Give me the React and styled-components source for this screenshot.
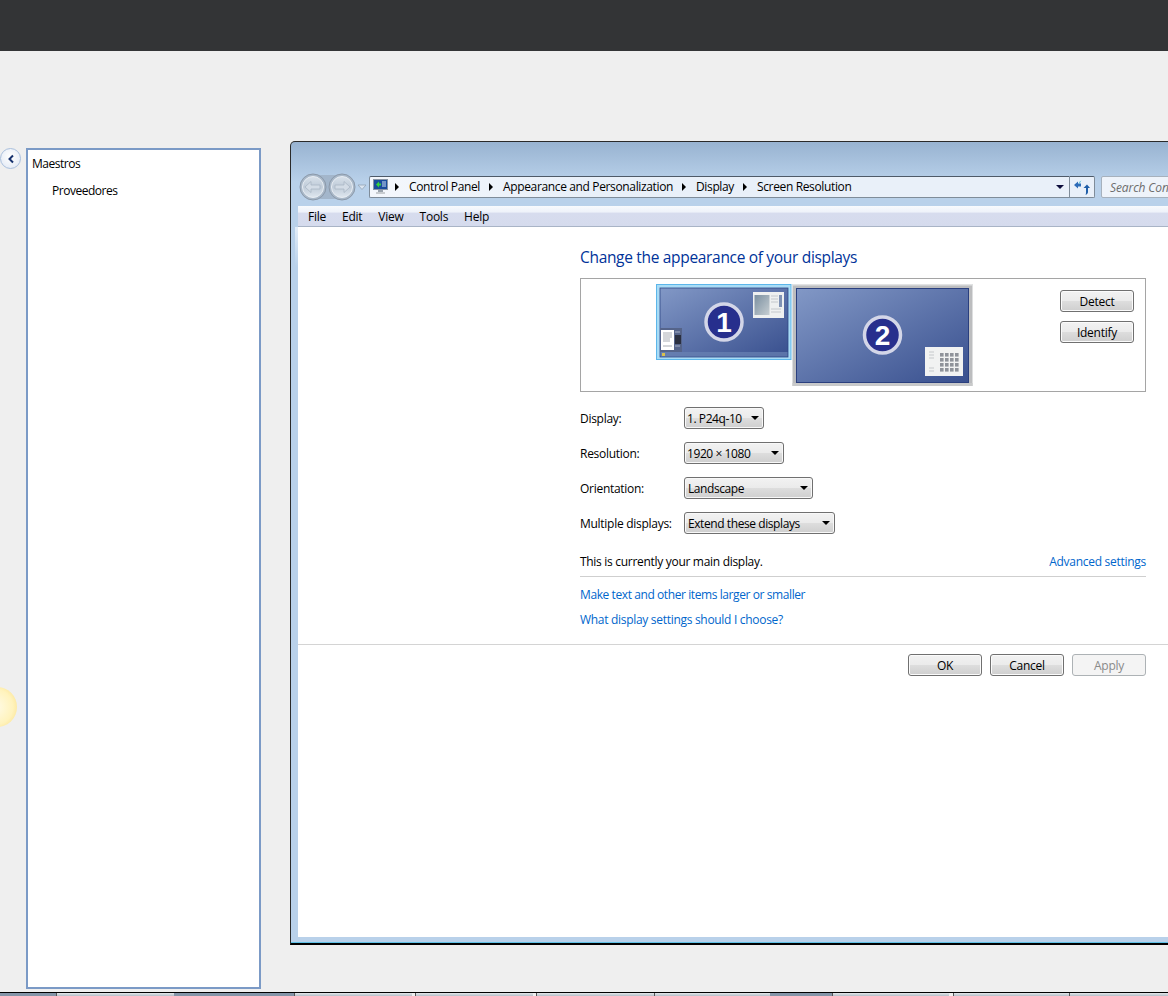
import React from "react";
import styled, { createGlobalStyle } from "styled-components";

const Global = createGlobalStyle`
  html, body { margin: 0; padding: 0; background: #efefef; }
  body { font-family: "Open Sans", "Noto Sans", sans-serif; font-size: 12px; color: #000; }
`;

const Page = styled.div`
  position: relative; width: 1168px; height: 996px; overflow: hidden;
  display: flex; flex-direction: column; background: #efefef;
`;
const TopBar = styled.header`height: 51px; flex: none; background: #333436;`;
const Main = styled.main`
  flex: 1; min-height: 0; display: flex; align-items: flex-start; padding-top: 90px;
`;
const ToggleCol = styled.div`width: 26px; flex: none; padding-top: 7px;`;
const Toggle = styled.button`
  display: flex; align-items: center; justify-content: center;
  width: 21px; height: 21px; margin: 0; padding: 0; border-radius: 50%;
  border: 1px solid #a9bfdd; background: radial-gradient(circle at 50% 40%, #fff, #dfe7f3);
`;
const Panel = styled.nav`
  box-sizing: border-box; flex: none; width: 235px; height: 841px; margin-top: 7px;
  background: #fff; border: 2px solid #7b9ac6; padding: 4px 0 0 4px;
`;
const TreeItem = styled.div`
  height: 27px; line-height: 20px; padding-left: ${p => p.$indent || 0}px; letter-spacing: -.48px;
`;
const Win = styled.section`
  box-sizing: border-box; flex: none; width: 1000px; height: 804px; margin-left: 29px;
  display: flex; flex-direction: column;
  border: 1px solid #2a2a2a; border-bottom: 2px solid #000; border-top-left-radius: 5px;
  background:
    linear-gradient(#e3edf8, #b9d1ea) no-repeat 4px 85px / 3px 40px,
    linear-gradient(#98b3d1 0, #b9d1ea 40px);
  box-shadow: inset 0 -1px 0 #5fc1e6;
`;
const Chrome = styled.div`
  height: 30px; flex: none; margin-top: 34px; padding-left: 7px; display: flex; align-items: flex-start;
`;
const Nav = styled.svg`display: block; flex: none; width: 71px; height: 30px; margin-top: -4px;`;
const Address = styled.div`
  box-sizing: border-box; flex: none; width: 700px; height: 22px;
  display: flex; align-items: center;
  background: linear-gradient(90deg, #f4f7fc, #e9f0f9 30%);
  border: 1px solid #7f8c99; border-top-color: #4e5a68; border-right: none; border-radius: 2px 0 0 2px;
`;
const AddressIcon = styled.svg`display: block; flex: none; width: 15px; height: 16px; margin: 0 -2px 0 3px;`;
const Crumb = styled.span`
  display: flex; align-items: center; white-space: nowrap; letter-spacing: -.36px; line-height: 18px; margin-top: -1px;
  &::before {
    content: ""; margin: 1px 10px 0 9px; border-style: solid; border-width: 4px 0 4px 4px;
    border-color: transparent transparent transparent #000;
  }
`;
const Drop = styled.i`
  margin-left: auto; margin-right: 5px; width: 0; height: 0;
  border-style: solid; border-width: 4px 4px 0 4px; border-color: #0d0d3c transparent transparent;
`;
const Refresh = styled.div`
  box-sizing: border-box; flex: none; width: 26px; height: 22px;
  display: flex; align-items: center; justify-content: center;
  background: #e9f0f9; border: 1px solid #7f8c99; border-top-color: #4e5a68; border-radius: 0 2px 2px 0;
`;
const Search = styled.div`
  box-sizing: border-box; flex: none; width: 200px; height: 22px; margin-left: 6px; padding-left: 8px;
  display: flex; align-items: center; font-style: italic; color: #6d6d6d; letter-spacing: -.1px;
  background: #eef3fa; border: 1px solid #a6b1bd; border-radius: 2px;
`;
const Inner = styled.div`
  flex: 1; min-height: 0; margin: 0 0 6px 7px; display: flex; flex-direction: column; background: #fff;
`;
const MenuBar = styled.div`
  height: 21px; flex: none; display: flex; align-items: center; padding: 0 0 0 10px; gap: 16px;
  background: linear-gradient(#f8fafd 0, #eef2fa 30%, #d7dcee 36%, #d5dbed 100%);
  border-bottom: 1px solid #a9b4c6; box-sizing: border-box; letter-spacing: -.25px;
`;
const Body = styled.div`
  padding: 0 0 0 282px; width: 566px;
`;
const Title = styled.h1`
  margin: 19px 0 0; font-size: 15.5px; line-height: 22px; font-weight: 400; color: #003399; letter-spacing: -.32px;
`;
const Preview = styled.div`
  box-sizing: border-box; margin-top: 10px; height: 114px; display: flex; align-items: flex-start;
  border: 1px solid #a5a5a5; padding: 5px 11px 0 75px;
`;
const Screens = styled.svg`display: block; flex: none; width: 318px; height: 103px;`;
const Side = styled.div`
  margin-left: auto; padding-top: 6px; display: flex; flex-direction: column; gap: 9px;
`;
const Btn = styled.button`
  box-sizing: border-box; width: 74px; height: 22px; margin: 0; padding: 0;
  font: 12px "Open Sans", sans-serif; letter-spacing: -.25px;
  color: ${p => (p.disabled ? "#8a8a8a" : "#000")};
  border: 1px solid ${p => (p.disabled ? "#adb2b5" : "#707070")}; border-radius: 3px;
  background: ${p => p.disabled ? "#f4f4f4" : "linear-gradient(#f2f2f2 0, #ebebeb 48%, #dddddd 52%, #cfcfcf 100%)"};
  box-shadow: ${p => (p.disabled ? "none" : "inset 0 0 0 1px #fbfbfb")};
`;
const Rows = styled.div`margin-top: 15px; display: flex; flex-direction: column; gap: 13px;`;
const Row = styled.div`display: flex; align-items: center; height: 22px;`;
const Label = styled.span`width: 104px; flex: none; letter-spacing: -.28px;`;
const Select = styled.div`
  box-sizing: border-box; height: 22px; width: ${p => p.$w}px; flex: none;
  display: flex; align-items: center; padding: 0 4px 0 ${p => p.$pad ?? 3}px; white-space: nowrap; letter-spacing: -.42px;
  border: 1px solid #707070; border-radius: 3px;
  background: linear-gradient(#f2f2f2 0, #ebebeb 48%, #dddddd 52%, #cfcfcf 100%);
  box-shadow: inset 0 0 0 1px #f8f8f8;
  &::after {
    content: ""; margin-left: auto; border-style: solid; border-width: 4px 4px 0;
    border-color: #000 transparent transparent;
  }
`;
const MainLine = styled.div`
  margin-top: 18px; height: 18px; display: flex; align-items: center; justify-content: space-between;
  padding-bottom: 6px; border-bottom: 1px solid #cfcfcf; letter-spacing: -.3px;
`;
const Lnk = styled.a`color: #0066cc; text-decoration: none; letter-spacing: ${p => p.$ls ?? -0.22}px;`;
const Links = styled.div`
  margin-top: 9px; display: flex; flex-direction: column; gap: 8px; line-height: 17px;
`;
const Footer = styled.div`
  margin-top: 16px; height: 34px; flex: none; border-top: 1px solid #d4d4d4;
  padding: 9px 0 0 610px; display: flex; gap: 8px;
`;
const Tabs = styled.footer`
  height: 4px; flex: none; display: flex; box-sizing: border-box; border-top: 1px solid #000;
`;
const Tab = styled.div`
  box-sizing: border-box; flex: none; width: ${p => p.$w}px; margin-left: ${p => p.$gap || 0}px;
  background: ${p => (p.$dark ? "#8495a8" : "linear-gradient(#e4e8ea, #b4bec8)")};
  border-left: 1px solid ${p => (p.$dark ? "#8495a8" : "#555")};
`;
const Glow = styled.div`
  position: absolute; left: -23px; top: 687px; width: 40px; height: 40px; border-radius: 50%;
  background: radial-gradient(circle at 45% 50%, #fffbe8 0, #fff3bd 60%, #fbe08a 90%, #f8e7ad 100%);
`;

function Monitor() {
  return (
    <AddressIcon viewBox="0 0 15 16">
      <rect x=".5" y=".5" width="14" height="10" fill="#1b4d9c" stroke="#8995a5" />
      <path d="M3 5.500l3-3v2h2v2H6v2z" fill="#35d33c" />
      <path d="M9 3h4M9 5h4M9 7h4" stroke="#cfe0f5" />
      <rect x="5" y="11" width="5" height="2" fill="#9aa3ad" />
      <rect x="3" y="13" width="9" height="2" fill="#c8ccd0" />
    </AddressIcon>
  );
}

function NavButtons() {
  return (
    <Nav viewBox="0 0 71 30">
      <defs>
        <linearGradient id="ng" x1="0" y1="0" x2="0" y2="1">
          <stop offset="0" stopColor="#d8e1ea" />
          <stop offset=".5" stopColor="#bfcbd8" />
          <stop offset="1" stopColor="#dfe7ef" />
        </linearGradient>
      </defs>
      <rect x="14" y="3" width="30" height="24" fill="#a3b6cb" />
      <circle cx="15" cy="15" r="13" fill="#aab9c9" stroke="#8b99aa" strokeWidth="1" />
      <circle cx="44" cy="15" r="13" fill="#aab9c9" stroke="#8b99aa" strokeWidth="1" />
      <circle cx="15" cy="15" r="10.500" fill="url(#ng)" stroke="#e8edf3" strokeWidth="1" />
      <circle cx="44" cy="15" r="10.500" fill="url(#ng)" stroke="#e8edf3" strokeWidth="1" />
      <path d="M7 15l6-5.500v3.500h9v4h-9v3.500z" fill="#d3dce6" stroke="#a9b6c4" strokeWidth=".8" />
      <path d="M52 15l-6-5.500v3.500h-9v4h9v3.500z" fill="#d3dce6" stroke="#a9b6c4" strokeWidth=".8" />
      <path d="M60 13h8l-4 4.500z" fill="#dbe5f0" stroke="#93a3b5" strokeWidth=".8" />
    </Nav>
  );
}

function RefreshIcon() {
  return (
    <svg width="16" height="15" viewBox="0 0 16 15">
      <path d="M0 5L4 1.500V3.500H7V6.500H4V8.500z" fill="#2d6cb8" />
      <path d="M5 3.500C5 2 6 .8 7.500 .5 6.500 1.500 6 2.500 6 3.500z" fill="#5cc7d8" />
      <path d="M9.500 8L13 4.500 16 8H14V12C14 13.500 13 14.500 11.500 14.800 12 14 12 13 12 12V8z" fill="#1f5ea8" />
    </svg>
  );
}

function Badge({ cx, cy, n }) {
  return (
    <g>
      <circle cx={cx} cy={cy} r="18" fill="#272f8d" stroke="#d3d6e8" strokeWidth="3.500" />
      <text x={cx} y={cy + 10} textAnchor="middle" fontFamily="'Liberation Sans', sans-serif"
        fontWeight="700" fontSize="28" fill="#fff">{n}</text>
    </g>
  );
}

function ScreensArt() {
  return (
    <Screens viewBox="0 0 318 103">
      <defs>
        <linearGradient id="s1" x1="0" y1="0" x2="1" y2="1">
          <stop offset="0" stopColor="#8298c6" />
          <stop offset="1" stopColor="#384f8e" />
        </linearGradient>
        <linearGradient id="pic" x1="0" y1="0" x2="1" y2="1">
          <stop offset="0" stopColor="#7a8fa0" />
          <stop offset="1" stopColor="#c6ced2" />
        </linearGradient>
      </defs>
      {/* monitor 1 */}
      <rect x=".5" y=".5" width="134.500" height="75" fill="#a9dcf6" stroke="#5cb6ea" />
      <rect x="4" y="4" width="128" height="69" fill="url(#s1)" stroke="#2f4786" strokeWidth=".8" />
      <rect x="4.500" y="68" width="127" height="4.500" fill="#6a83b4" opacity=".7" />
      <rect x="6" y="69" width="3" height="3" fill="#d9c04d" />
      <rect x="97" y="8" width="31" height="26" fill="#eef0f0" />
      <rect x="98.500" y="11" width="15" height="20" fill="url(#pic)" />
      <path d="M115 12h7M115 15h7M115 18h7M115 25h10M115 28h10" stroke="#c4c8cc" />
      <rect x="123" y="11" width="3" height="12" fill="#7f92b4" />
      <rect x="4" y="44" width="22" height="24" fill="#55648a" />
      <rect x="5" y="46" width="13" height="20" fill="#fff" />
      <path d="M7 49h9M7 51h9M7 53h9M7 55h7M7 57h7M7 62h9" stroke="#a9adb4" />
      <rect x="19" y="51" width="6" height="9" fill="#2a2f3f" />
      <path d="M19 48h5M19 62h5" stroke="#a6aec4" />
      {/* monitor 2 */}
      <rect x="136.500" y="0" width="180" height="102" fill="#bcbdbf" />
      <rect x="136.500" y="0" width="180" height="1.500" fill="#e2e3e4" />
      <rect x="136.500" y="99" width="180" height="3" fill="#c8c9ca" />
      <rect x="140.500" y="4.500" width="172" height="94" fill="url(#s1)" stroke="#2a3f7e" />
      <rect x="269" y="63" width="38" height="29" fill="#f1f2f2" />
      <path d="M273 68h5M273 71h5M273 74h5M273 84h5M273 87h5" stroke="#c6c9cc" />
      {[0, 1, 2, 3].map(r =>
        [0, 1, 2, 3].map(c => (
          <rect key={`${r}-${c}`} x={284 + c * 5} y={69 + r * 5} width="3.600" height="3.600" fill="#8f939a" />
        ))
      )}
      <Badge cx={68} cy={38} n="1" />
      <Badge cx={226.500} cy={51} n="2" />
    </Screens>
  );
}

export default function App() {
  return (
    <Page>
      <Global />
      <TopBar />
      <Main>
        <ToggleCol>
          <Toggle aria-label="Collapse">
            <svg width="8" height="10" viewBox="0 0 8 10"><path d="M6 1.500L2.500 5 6 8.500" fill="none" stroke="#17326e" strokeWidth="2" /></svg>
          </Toggle>
        </ToggleCol>
        <Panel>
          <TreeItem>Maestros</TreeItem>
          <TreeItem $indent={20}>Proveedores</TreeItem>
        </Panel>
        <Win>
          <Chrome>
            <NavButtons />
            <Address>
              <Monitor />
              <Crumb>Control Panel</Crumb>
              <Crumb>Appearance and Personalization</Crumb>
              <Crumb>Display</Crumb>
              <Crumb>Screen Resolution</Crumb>
              <Drop />
            </Address>
            <Refresh><RefreshIcon /></Refresh>
            <Search>Search Control Panel</Search>
          </Chrome>
          <Inner>
            <MenuBar>
              <span>File</span><span>Edit</span><span>View</span><span>Tools</span><span>Help</span>
            </MenuBar>
            <Body>
              <Title>Change the appearance of your displays</Title>
              <Preview>
                <ScreensArt />
                <Side>
                  <Btn>Detect</Btn>
                  <Btn>Identify</Btn>
                </Side>
              </Preview>
              <Rows>
                <Row><Label>Display:</Label><Select $w={80} $pad={2}>1. P24q-10</Select></Row>
                <Row><Label>Resolution:</Label><Select $w={100} $pad={2}>1920 × 1080</Select></Row>
                <Row><Label>Orientation:</Label><Select $w={129}>Landscape</Select></Row>
                <Row><Label>Multiple displays:</Label><Select $w={151}>Extend these displays</Select></Row>
              </Rows>
              <MainLine>
                <span>This is currently your main display.</span>
                <Lnk $ls={-0.28}>Advanced settings</Lnk>
              </MainLine>
              <Links>
                <Lnk $ls={-0.41}>Make text and other items larger or smaller</Lnk>
                <Lnk $ls={-0.3}>What display settings should I choose?</Lnk>
              </Links>
            </Body>
            <Footer>
              <Btn>OK</Btn>
              <Btn>Cancel</Btn>
              <Btn disabled>Apply</Btn>
            </Footer>
          </Inner>
        </Win>
      </Main>
      <Tabs>
        <Tab $w={56} $dark />
        <Tab $w={118} />
        <Tab $w={120} $dark />
        <Tab $w={118} />
        <Tab $w={118} $gap={3} />
        <Tab $w={118} $gap={3} />
        <Tab $w={116} />
        <Tab $w={62} $dark />
        <Tab $w={117} />
        <Tab $w={116} $gap={4} />
        <Tab $w={99} />
      </Tabs>
      <Glow />
    </Page>
  );
}
